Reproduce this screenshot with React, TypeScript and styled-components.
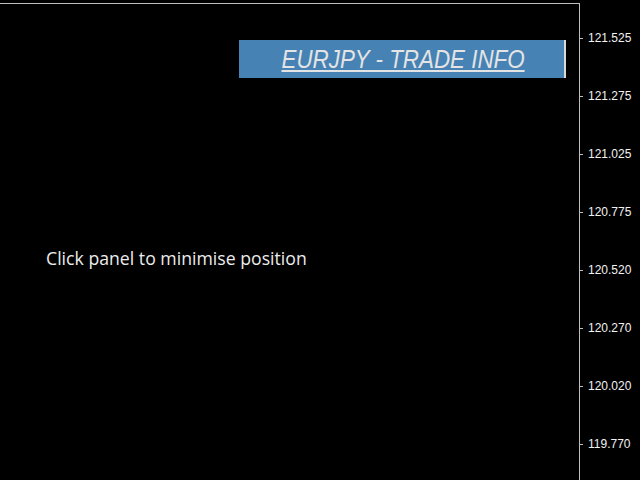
import React from 'react';
import styled, { createGlobalStyle } from 'styled-components';

const Global = createGlobalStyle`
    html, body {
        margin: 0;
        padding: 0;
        background: #000;
        width: 640px;
        height: 480px;
        overflow: hidden;
    }
`;

const Screen = styled.div`
    width: 640px;
    height: 480px;
    display: grid;
    grid-template-columns: 580px 1fr;
    background: #000;
    padding-top: 3px;
    box-sizing: border-box;
`;

const Chart = styled.div`
    border-top: 1px solid #bdbdbd;
    border-right: 1px solid #bdbdbd;
    box-sizing: border-box;
    display: flex;
    flex-direction: column;
`;

const TradePanel = styled.div`
    margin: 36px 0 0 239px;
    width: 327px;
    height: 38px;
    background: #4682b4;
    border-right: 2px solid #d8d8d8;
    box-sizing: border-box;
    display: flex;
    align-items: center;
    justify-content: center;
    cursor: pointer;
`;

const PanelTitle = styled.span`
    font-family: "Liberation Sans", Arial, sans-serif;
    font-style: italic;
    font-size: 26px;
    color: #e4e4e4;
    text-decoration: underline;
    text-underline-offset: 2px;
    text-decoration-thickness: 2px;
    transform: scaleX(0.86);
    padding-left: 4px;
    margin-top: 1px;
    white-space: nowrap;
`;

const Hint = styled.div`
    margin: 167px 0 0 46px;
    font-family: "Open Sans", "Noto Sans", sans-serif;
    font-size: 19px;
    color: #ececec;
    white-space: nowrap;
    transform: scaleX(0.93);
    transform-origin: left center;
`;

const Axis = styled.div`
    display: flex;
    flex-direction: column;
    gap: 46px;
    padding-top: 29px;
`;

const Tick = styled.div`
    display: flex;
    align-items: center;
    height: 12px;
    gap: 5px;
    &::before {
        content: '';
        width: 3px;
        height: 1px;
        background: #bdbdbd;
    }
`;

const Price = styled.span`
    font-family: "Liberation Sans", Arial, sans-serif;
    font-size: 12px;
    color: #f2f2f2;
    line-height: 12px;
`;

const prices = ['121.525', '121.275', '121.025', '120.775', '120.520', '120.270', '120.020', '119.770'];

const App = () => {
    return (
        <>
            <Global />
            <Screen>
                <Chart>
                    <TradePanel>
                        <PanelTitle>EURJPY - TRADE INFO</PanelTitle>
                    </TradePanel>
                    <Hint>Click panel to minimise position</Hint>
                </Chart>
                <Axis>
                    {prices.map((p) => (
                        <Tick key={p}>
                            <Price>{p}</Price>
                        </Tick>
                    ))}
                </Axis>
            </Screen>
        </>
    );
};

export default App;
